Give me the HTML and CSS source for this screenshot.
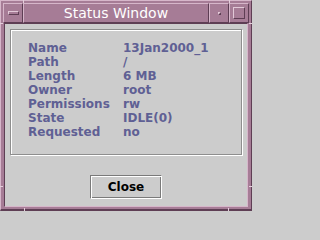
FILE: index.html
```html
<!DOCTYPE html>
<html>
<head>
<meta charset="utf-8">
<link rel="stylesheet" href="styles.css">
</head>
<body>
<div class="window">
  <span class="tick tick-tl"></span>
  <span class="tick tick-tr"></span>
  <span class="tick tick-bl"></span>
  <span class="tick tick-br"></span>
  <span class="tick-v tick-lt"></span>
  <span class="tick-v tick-rt"></span>
  <span class="tick-v tick-lb"></span>
  <span class="tick-v tick-rb"></span>
  <div class="titlebar">
    <div class="tb-btn menu-btn"><span class="menu-bar"></span></div>
    <div class="title">Status Window</div>
    <div class="tb-btn min-btn"><span class="min-dot"></span></div>
    <div class="tb-btn max-btn"><span class="max-box"></span></div>
  </div>
  <div class="content">
    <div class="panel">
      <div class="grid">
        <span>Name</span><span>13Jan2000_1</span>
        <span>Path</span><span>/</span>
        <span>Length</span><span>6 MB</span>
        <span>Owner</span><span>root</span>
        <span>Permissions</span><span>rw</span>
        <span>State</span><span>IDLE(0)</span>
        <span>Requested</span><span>no</span>
      </div>
    </div>
    <div class="actions">
      <div class="close-btn">Close</div>
    </div>
  </div>
</div>
</body>
</html>
```

FILE: styles.css
```css
html, body {
  margin: 0;
  padding: 0;
  background: #cccccc;
}
.window {
  position: relative;
  width: 252px;
  height: 211px;
  box-sizing: border-box;
  background: #a67c96;
  border-style: solid;
  border-width: 1px 1px 2px 1px;
  border-color: #d6b6ca #5e3e54 #5e3e54 #d6b6ca;
  padding: 2px 2px 1px 2px;
  display: flex;
  flex-direction: column;
}
.tick {
  position: absolute;
  width: 1px;
  height: 3px;
  background: #e4cfdc;
}
.tick-v {
  position: absolute;
  width: 3px;
  height: 1px;
  background: #e4cfdc;
}
.tick-tl { left: 22px; top: -1px; }
.tick-tr { left: 228px; top: -1px; }
.tick-bl { left: 23px; bottom: -2px; }
.tick-br { left: 227px; bottom: -2px; }
.tick-lt { left: -1px; top: 22px; }
.tick-rt { right: -1px; top: 22px; }
.tick-lb { left: -1px; top: 185px; }
.tick-rb { right: -1px; top: 185px; }
.titlebar {
  height: 20px;
  display: flex;
  flex: none;
}
.tb-btn, .title {
  box-sizing: border-box;
  border: 1px solid;
  border-color: #d6b6ca #5e3e54 #5e3e54 #d6b6ca;
  display: flex;
  align-items: center;
  justify-content: center;
}
.tb-btn {
  width: 20px;
  flex: none;
}
.title {
  flex: 1;
  color: #ffffff;
  font-family: "DejaVu Sans", sans-serif;
  font-size: 14px;
  line-height: 18px;
}
.menu-bar {
  width: 11px;
  height: 4px;
  box-sizing: border-box;
  border: 1px solid;
  border-color: #e2c9d8 #5e3e54 #5e3e54 #e2c9d8;
}
.min-dot {
  width: 3px;
  height: 3px;
  box-sizing: border-box;
  border: 1px solid;
  border-color: #e2c9d8 #5e3e54 #5e3e54 #e2c9d8;
}
.max-box {
  width: 12px;
  height: 12px;
  box-sizing: border-box;
  border: 1px solid;
  border-color: #e2c9d8 #5e3e54 #5e3e54 #e2c9d8;
}
.content {
  flex: 1;
  margin: 0 1px 1px 1px;
  box-sizing: border-box;
  border: 1px solid;
  border-color: #5e3e54 #d6b6ca #d6b6ca #5e3e54;
  background: #cccccc;
  padding: 5px 5px 0 5px;
  display: flex;
  flex-direction: column;
}
.panel {
  height: 126px;
  box-sizing: border-box;
  border: 1px solid #8e8e8e;
  box-shadow: inset 1px 1px 0 #ffffff, 1px 1px 0 #ffffff;
  padding: 11px 0 0 17px;
}
.grid {
  display: grid;
  grid-template-columns: 95px auto;
  font-family: "DejaVu Sans", sans-serif;
  font-weight: bold;
  font-size: 12px;
  line-height: 14px;
  color: #5f6094;
}
.actions {
  display: flex;
  justify-content: center;
  padding-top: 20px;
}
.close-btn {
  width: 72px;
  height: 24px;
  box-sizing: border-box;
  border: 1px solid;
  border-color: #7a7a7a #ffffff #ffffff #7a7a7a;
  box-shadow: inset 1px 1px 0 #ffffff, inset -1px -1px 0 #7a7a7a;
  display: flex;
  align-items: center;
  justify-content: center;
  font-family: "DejaVu Sans", sans-serif;
  font-weight: bold;
  font-size: 12px;
  color: #000000;
}
```
